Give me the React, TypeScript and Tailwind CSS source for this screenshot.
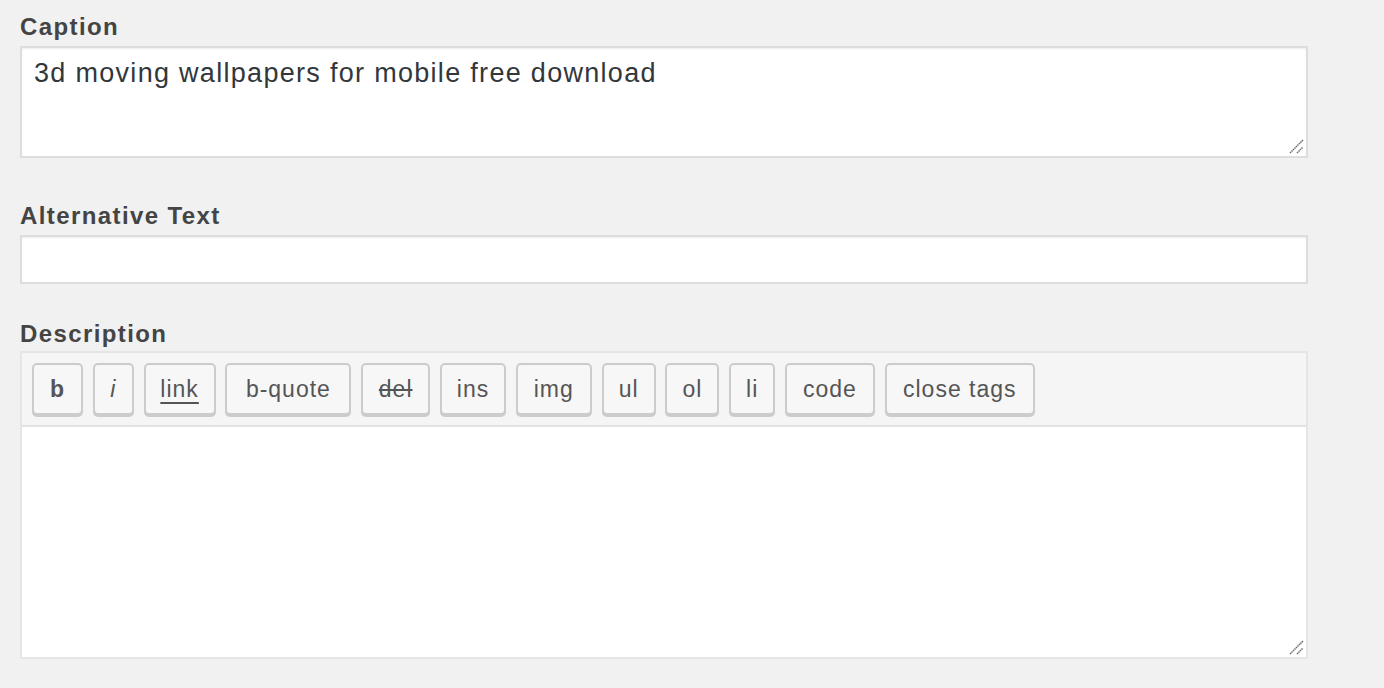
const font = { fontFamily: '"Liberation Sans", Arial, sans-serif' }

function Grip() {
  return (
    <svg className="absolute bottom-[2px] right-[2px]" width="16" height="16" viewBox="0 0 16 16">
      <line x1="2" y1="15" x2="15" y2="2" stroke="#6b6b6b" strokeWidth="1.5" strokeDasharray="1.5 0.6" />
      <line x1="9" y1="15" x2="15" y2="9" stroke="#6b6b6b" strokeWidth="1.5" strokeDasharray="1.5 0.6" />
    </svg>
  )
}

const buttons: { label: string; w: number; cls?: string }[] = [
  { label: 'b', w: 51, cls: 'font-bold' },
  { label: 'i', w: 41, cls: 'italic' },
  { label: 'link', w: 72, cls: 'underline underline-offset-[5px]' },
  { label: 'b-quote', w: 126 },
  { label: 'del', w: 69, cls: 'line-through' },
  { label: 'ins', w: 66 },
  { label: 'img', w: 76 },
  { label: 'ul', w: 54 },
  { label: 'ol', w: 54 },
  { label: 'li', w: 46 },
  { label: 'code', w: 90 },
  { label: 'close tags', w: 150 },
]

export default function App() {
  return (
    <div className="min-h-[688px] w-[1384px] bg-[#f1f1f1] pl-5 pt-[13px]" style={font}>
      <div className="w-[1288px]">
        <label className="block text-[24px] font-bold leading-[28px] tracking-[1.4px] text-[#444]">Caption</label>
        <div className="relative mt-[5px] h-[112px] border-2 border-[#dddddd] bg-white px-3 pt-[8px] shadow-[inset_0_1px_2px_rgba(0,0,0,0.07)]">
          <p className="text-[27px] leading-[34px] tracking-[1.3px] text-[#32373c]">3d moving wallpapers for mobile free download</p>
          <Grip />
        </div>

        <label className="mt-[44px] block text-[24px] font-bold leading-[28px] tracking-[1.4px] text-[#444]">Alternative Text</label>
        <div className="mt-[5px] h-[49px] border-2 border-[#dddddd] bg-white shadow-[inset_0_1px_2px_rgba(0,0,0,0.07)]" />

        <label className="mt-[36px] block text-[24px] font-bold leading-[28px] tracking-[1.4px] text-[#444]">Description</label>
        <div className="mt-[3px] border-2 border-[#e5e5e5]">
          <div className="flex h-[74px] items-start gap-[9.8px] border-b-2 border-[#e2e2e2] bg-[#f5f5f5] pl-[10px] pt-[10px]">
            {buttons.map((b) => (
              <button
                key={b.label}
                className="flex h-[52px] shrink-0 items-center justify-center rounded-[5px] border-2 border-[#cccccc] bg-[#f7f7f7] text-[23px] tracking-[1px] text-[#555] shadow-[0_2px_0_#cccccc]"
                style={{ width: b.w }}
              >
                <span className={b.cls}>{b.label}</span>
              </button>
            ))}
          </div>
          <div className="relative h-[230px] bg-white">
            <Grip />
          </div>
        </div>
      </div>
    </div>
  )
}
